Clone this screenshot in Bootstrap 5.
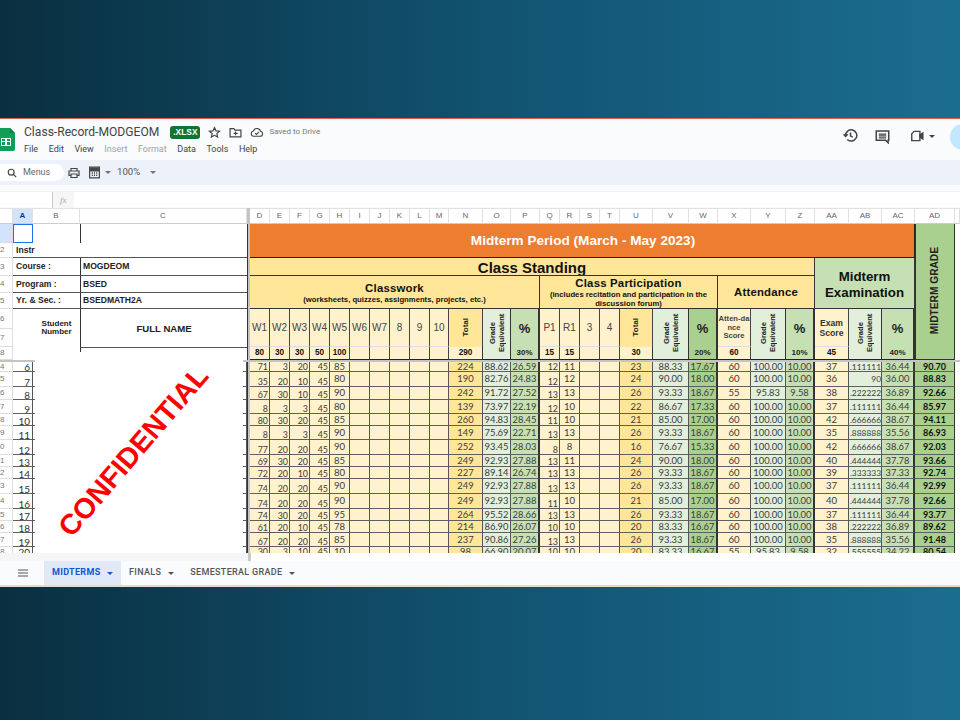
<!DOCTYPE html>
<html lang="en"><head><meta charset="utf-8"><title>Class-Record-MODGEOM</title>
<link rel="stylesheet" href="https://cdn.jsdelivr.net/npm/bootstrap@5.3.0/dist/css/bootstrap.min.css">
<style>
html,body{margin:0;height:720px;overflow:hidden}
body{background:linear-gradient(90deg,#0a2f40 0%,#115270 50%,#1b6d90 100%);font-family:"Roboto","Liberation Sans",sans-serif;color:#444}
.slide{padding-top:118px;height:720px}
.appwin{height:469px;background:#f9fbfd;border-top:1px solid #d9604c;border-bottom:2px solid #e8dcc0;overflow:hidden}
.titlebar{height:41px;position:relative}
.docname{font-size:12.1px;color:#444;line-height:14px}
.xlsx{background:#137333;color:#fff;font:700 8.4px "Liberation Sans",sans-serif;border-radius:3px;padding:2px 3px;line-height:9px;margin-left:11px}
.saved{font-size:8px;color:#777;margin-left:5px}
.mini{margin-left:8px}
.menus{font-size:9px;gap:10.5px;color:#444;line-height:12px}
.menus .off{color:#a0a4a8}
.titlecol{padding-left:24px;padding-top:6px}
.rightico{position:absolute;right:0;top:0;height:41px;width:120px}
.avatar{width:26px;height:26px;border-radius:50%;background:#c2e7ff;position:absolute;left:110px;top:5px}
.tools{height:25px;background:#edf2fa;gap:0}
.searchpill{width:64px;height:17px;background:#fff;border-radius:0 9px 9px 0;font-size:9px;color:#666;padding-left:7px;gap:6px}
.zoomtxt{font-size:9.6px;color:#555;margin-left:6px}
.namebar{height:23px;padding-top:6px;background:#fafbfc}
.namebar .inner{height:16px;background:#fff;border-top:1px solid #f2f2f2}
.fxbox{width:22px;height:16px;margin-left:52px;background:#f6f6f6;border-left:1px solid #ccc;color:#aaa;font:italic 9px "Liberation Serif",serif;padding-left:7px;line-height:16px}
.gridwrap{height:345px;overflow:hidden;position:relative;background:#fff}
.sg{width:960px;table-layout:fixed;border-collapse:separate;border-spacing:0;font-family:"Liberation Sans",sans-serif;color:#222}
.sg td{padding:0;overflow:hidden;line-height:1;white-space:nowrap;text-align:center;vertical-align:middle}
.sg tr.hd td{height:16px;font-size:8px;color:#666;background:#fff;border-right:1px solid #e0e0e0;border-bottom:1px solid #ccc;border-top:1px solid #e2e2e2}
.sg tr.hd td.activecol{background:#d3e3fd;color:#0b3a80;font-weight:700}
.sg td.rn{background:#fff;color:#777;font-size:8px;text-align:left;padding-left:0;border-right:1px solid #ddd;border-bottom:1px solid #ddd}
.sg td.rnact{background:#d3e3fd}
.sg td.sep{background:#c4c4c4;border-left:1px solid #333}
.sg tr.hd td.sep{background:#c4c4c4;border:0}
.r19{height:19px}.r15{height:15px}.r17{height:17px}.r16{height:16px}.r20{height:20px}.r18{height:18px}.r13{height:13px}.r10{height:10px}.r14{height:14px}.r12{height:12px}
.sg td.lbl{font-weight:700;font-size:8.6px;text-align:left;padding-left:3px;border-bottom:1px solid #555}
.sg td.lb2{border-left:1px solid #333;padding-left:2px}
.sg td.instr{font-weight:700;font-size:8.6px;text-align:left;padding-left:3px;border-bottom:1px solid #555}
.sg td.vline{border-left:1px solid #333}
.cellsel{box-shadow:inset 0 0 0 1px #1a73e8}
.sg td.orange{background:#ed7d31;color:#fff;font-weight:700;font-size:13.6px;border-bottom:1px solid #222;border-right:1px solid #222;padding-left:2px}
.gold{background:#ffe699;color:#111;font-weight:700}
.sg td.gold{border-right:1px solid #333;border-bottom:1px solid #333}
.sg td.cstand{font-size:15px;line-height:15px;vertical-align:top;padding-top:2px}
.big{font-size:11.4px}
.sg td.big{padding-top:2px}
.big b{font-size:11.4px;display:block;letter-spacing:.2px;margin-bottom:1px}
.sub{font-size:7.7px;display:block;line-height:9px;white-space:normal}
.sg td.exam{background:#c6e0b4;font-weight:700;font-size:13.3px;line-height:16px;color:#111;border-right:1px solid #333;border-bottom:1px solid #333;padding-top:3px}
.finalg{background:#a9d08e;border-left:1px solid #333;border-right:1px solid #333;border-bottom:1px solid #333;color:#222;font-size:10.2px;font-weight:700}
.vert{writing-mode:vertical-rl;transform:rotate(180deg);display:inline-block;white-space:normal}
.wk{background:#fff2cc;font-size:10px;color:#444;border-right:1px solid #444;border-bottom:1px solid #ddd}
.tt{background:#ffe699;border-right:1px solid #444}
.tot{font-size:8.2px;font-weight:700;color:#111;background:#fff2cc;border-right:1px solid #444;border-bottom:1px solid #222}
.sg td.ge{background:#e2efda;font-size:7.6px;font-weight:700;line-height:9px;color:#222;border-right:1px solid #333;border-bottom:1px solid #222}
.ge .vert{height:46px;text-align:center}
.pc{background:#c6e0b4;font-size:13px;font-weight:700;color:#222;border-right:2px solid #333;vertical-align:middle}
.pc2{background:#c6e0b4;font-size:8px;font-weight:700;color:#222;border-right:2px solid #333;border-bottom:1px solid #222}
.pd{background:#a9d08e}
.sg td.ttl{font-size:8px;font-weight:700}
.sg td.att{font-size:7.6px;line-height:8.8px;white-space:normal;font-weight:700;background:#fff2cc;color:#444;border-right:1px solid #444;border-bottom:1px solid #ddd}
.sg td.examh{font-size:8.6px;font-weight:700;white-space:normal;line-height:10px;background:#fff2cc;color:#333;border-right:1px solid #444;border-bottom:1px solid #ddd}
.sg td.fname{font-size:9.6px}
.sg td.lname{font-size:8px;color:#333;font-weight:400;vertical-align:top;padding-top:3px;border-top:1px solid #555}
.hgap td{height:2px;font-size:0;background:#c4c4c4!important;border:0!important}
.sg tr.dat td{line-height:8px}
.dat td{background:#fff2cc;font-family:"Lato",sans-serif;font-size:8.9px;color:#3c3c3c;border-right:1px solid #555;border-bottom:1px solid #5f5f5f}
.dat td:nth-child(1){background:#fff;color:#777;font:8px "Liberation Sans",sans-serif;text-align:left;border-right:1px solid #ddd;border-bottom:1px solid #ddd}
.dat td:nth-child(2){background:#fff;color:#333;font-size:10px;text-align:right;padding-right:2px;vertical-align:bottom}
.dat td:nth-child(3),.dat td:nth-child(4){background:#fff}
.dat td:nth-child(5){background:#c4c4c4;border-left:1px solid #333;border-right:0;border-bottom:0}
.dat td:nth-child(6),.dat td:nth-child(7),.dat td:nth-child(8),.dat td:nth-child(9),.dat td:nth-child(19){text-align:right;vertical-align:bottom;padding-right:1px}
.dat td:nth-child(10),.dat td:nth-child(20){font-size:9.6px}
.dat td:nth-child(16),.dat td:nth-child(23){background:#ffe699;font-size:9.4px}
.dat td:nth-child(17),.dat td:nth-child(24),.dat td:nth-child(27),.dat td:nth-child(30){background:#e2efda;font-size:9.4px}
.dat td:nth-child(18),.dat td:nth-child(28),.dat td:nth-child(31){background:#c6e0b4;font-size:9.4px;border-right:2px solid #333}
.dat td:nth-child(25){background:#a9d08e;font-size:9.4px;border-right:2px solid #333}
.dat td:nth-child(26),.dat td:nth-child(29){font-size:9.6px}
.dat td:nth-child(30){text-align:right;font-size:8.4px}
.dat td:nth-child(32){background:#a9d08e;font:700 9px "Lato",sans-serif;color:#111;border-right:1px solid #333}
.dat td:nth-child(33){background:#fff;border:0}
.coverbox{position:absolute;left:35px;top:150px;width:208px;height:195px;background:#fff;z-index:3}
.coverbox2{position:absolute;left:80px;top:144px;width:166px;height:6px;background:#fff;z-index:3}
.stamp{font:700 28.6px "Liberation Sans",sans-serif;color:#f00;transform:translate(-6px,-4px) rotate(-49.5deg);white-space:nowrap}
.strip{height:8px;background:#fff}
.strip .leftp{width:248px;background:#f5f6f7}
.strip .barp{width:3px;background:#c9c9c9}
.sheets{height:24px}
.hamb{margin-left:18px;width:10px;margin-right:16px}
.tabi{height:24px;font-size:9px;letter-spacing:.33px;color:#555;font-weight:500;padding:0 8px;gap:7px}
.tabi.on{background:#e1e9f7;color:#0b57d0;font-weight:700;width:77px;gap:0;justify-content:space-between;padding-right:8px}
.caret{width:0;height:0;border-left:3px solid transparent;border-right:3px solid transparent;border-top:3px solid currentColor}
</style></head><body>
<div class="slide"><div class="appwin d-flex flex-column">
<div class="titlebar d-flex">
 <svg width="15" height="24" viewBox="0 0 15 24" class="position-absolute start-0" style="top:9px"><path d="M-4 0H10L15 5V21Q15 23 13 23H-4Z" fill="#0f9d58"/><path d="M10 0L15 5H10Z" fill="#0b7d46"/><rect x="1" y="10" width="10" height="8" fill="#fff"/><path d="M2 13h3v-2H2zM7 13h3v-2H7zM2 17h3v-3H2zM7 17h3v-3H7z" fill="#0f9d58"/></svg>
 <div class="titlecol">
  <div class="d-flex align-items-center"><span class="docname">Class-Record-MODGEOM</span><span class="xlsx">.XLSX</span>
   <svg class="mini" width="13" height="13" viewBox="0 0 24 24" fill="none" stroke="#444" stroke-width="2.2"><path d="M12 3l2.800 6 6.500.7-4.900 4.400 1.400 6.400L12 17.200l-5.800 3.300 1.400-6.400L2.700 9.700 9.200 9z"/></svg>
   <svg class="mini" width="13" height="13" viewBox="0 0 24 24" fill="none" stroke="#444" stroke-width="2.2"><path d="M2 5h7l2 2.500h11V20H2zM12 10v7M8.500 13.500H16"/></svg>
   <svg class="mini" width="14" height="13" viewBox="0 0 24 24" fill="none" stroke="#444" stroke-width="2"><path d="M6 19a5 5 0 0 1-.6-9.900A7 7 0 0 1 18.600 9.700 4.700 4.700 0 0 1 18 19zM8.500 13l2.500 2.500 4.500-4.500"/></svg>
   <span class="saved">Saved to Drive</span></div>
  <div class="menus d-flex mt-1"><span>File</span><span>Edit</span><span>View</span><span class="off">Insert</span><span class="off">Format</span><span>Data</span><span>Tools</span><span>Help</span></div>
 </div>
 <div class="rightico">
  <svg class="position-absolute" style="left:3px;top:9px" width="15" height="15" viewBox="0 0 24 24" fill="none" stroke="#444" stroke-width="2.4"><path d="M4 12a9 9 0 1 1 2.800 6.500M1 10l3.200 3.500L7.500 10M12 7v5.500l3.500 2"/></svg>
  <svg class="position-absolute" style="left:35px;top:10px" width="15" height="15" viewBox="0 0 24 24" fill="none" stroke="#444" stroke-width="2.400"><path d="M2 3h20v15h-1v4l-4-4H2z"/><path d="M6 8h12M6 11h12M6 14h12" stroke-width="2"/></svg>
  <svg class="position-absolute" style="left:69px;top:10px" width="16" height="14" viewBox="0 0 24 24" fill="none" stroke="#444" stroke-width="2.400"><path d="M7 4h10v16H3V8z"/><path d="M17 10l5-3v10l-5-3z" fill="#444"/></svg>
  <span class="caret position-absolute" style="left:89px;top:16px"></span>
  <span class="avatar"></span>
 </div>
</div>
<div class="tools d-flex align-items-center">
 <div class="searchpill d-flex align-items-center"><svg width="10" height="10" viewBox="0 0 24 24" fill="none" stroke="#444" stroke-width="2.800"><circle cx="10" cy="10" r="7"/><path d="M15 15l7 7"/></svg><span>Menus</span></div>
 <svg class="ms-1" width="12" height="12" viewBox="0 0 24 24" fill="none" stroke="#444" stroke-width="2.400"><path d="M6 8V3h12v5M6 17H2V8h20v9h-4M6 14h12v7H6z"/></svg>
 <svg class="ms-2" width="13" height="13" viewBox="0 0 24 24" fill="none" stroke="#444" stroke-width="2.200"><path d="M3 2h18v20H3zM3 9h18"/><path d="M7 13h2M11 13h2M15 13h2M7 17h2M11 17h2M15 17h2" stroke-width="2.600"/><rect x="5" y="4" width="14" height="4" fill="#444"/></svg>
 <span class="caret ms-1 text-secondary"></span>
 <span class="zoomtxt">100%</span>
 <span class="caret text-secondary" style="margin-left:10px"></span>
</div>
<div class="namebar"><div class="inner d-flex"><div class="fxbox">fx</div></div></div>
<div class="gridwrap">
<table class="sg">
<colgroup><col width="13"><col width="20"><col width="47"><col width="167"><col width="3"><col width="20"><col width="20"><col width="20"><col width="20"><col width="20"><col width="20"><col width="20"><col width="20"><col width="20"><col width="19"><col width="34"><col width="28"><col width="29"><col width="20"><col width="20"><col width="20"><col width="20"><col width="33"><col width="36"><col width="29"><col width="33"><col width="35"><col width="29"><col width="34"><col width="33"><col width="33"><col width="40"><col width="5"></colgroup>
<tbody>
<tr class="hd"><td></td><td class="activecol">A</td><td>B</td><td>C</td><td class="sep"></td><td>D</td><td>E</td><td>F</td><td>G</td><td>H</td><td>I</td><td>J</td><td>K</td><td>L</td><td>M</td><td>N</td><td>O</td><td>P</td><td>Q</td><td>R</td><td>S</td><td>T</td><td>U</td><td>V</td><td>W</td><td>X</td><td>Y</td><td>Z</td><td>AA</td><td>AB</td><td>AC</td><td>AD</td><td></td></tr>
<tr class="r19"><td class="rn rnact"></td><td class="cellsel"></td><td></td><td class="vline"></td><td class="sep" rowspan="8"></td><td class="orange" colspan="26" rowspan="2">Midterm Period (March - May 2023)</td><td class="finalg" rowspan="8"><span class="vert">MIDTERM GRADE</span></td><td rowspan="8"></td></tr>
<tr class="r15"><td class="rn">2</td><td class="instr" colspan="2">Instr</td><td class="lbl"></td></tr>
<tr class="r17"><td class="rn">3</td><td class="lbl" colspan="2">Course :</td><td class="lbl lb2">MOGDEOM</td><td class="gold cstand" colspan="23">Class Standing</td><td class="exam" colspan="3" rowspan="3">Midterm<br>Examination</td></tr>
<tr class="r16"><td class="rn">4</td><td class="lbl" colspan="2">Program :</td><td class="lbl lb2">BSED</td><td class="gold big" colspan="13" rowspan="2"><b>Classwork</b><span class="sub">(worksheets, quizzes, assignments, projects, etc.)</span></td><td class="gold big" colspan="7" rowspan="2"><b>Class Participation</b><span class="sub">(includes recitation and participation in the discussion forum)</span></td><td class="gold big" colspan="3" rowspan="2"><b>Attendance</b></td></tr>
<tr class="r16"><td class="rn">5</td><td class="lbl" colspan="2">Yr. &amp; Sec. :</td><td class="lbl lb2">BSEDMATH2A</td></tr>
<tr class="r20"><td class="rn">6</td><td rowspan="3"></td><td class="ttl" rowspan="2">Student<br>Number</td><td class="vline ttl fname" rowspan="2">FULL NAME</td><td class="wk" rowspan="2">W1</td><td class="wk" rowspan="2">W2</td><td class="wk" rowspan="2">W3</td><td class="wk" rowspan="2">W4</td><td class="wk" rowspan="2">W5</td><td class="wk" rowspan="2">W6</td><td class="wk" rowspan="2">W7</td><td class="wk" rowspan="2">8</td><td class="wk" rowspan="2">9</td><td class="wk" rowspan="2">10</td><td class="tt ttl" rowspan="2"><span class="vert">Total</span></td><td class="ge" rowspan="3"><span class="vert">Grade Equivalent</span></td><td class="pc" rowspan="2">%</td><td class="wk" rowspan="2">P1</td><td class="wk" rowspan="2">R1</td><td class="wk" rowspan="2">3</td><td class="wk" rowspan="2">4</td><td class="tt ttl" rowspan="2"><span class="vert">Total</span></td><td class="ge" rowspan="3"><span class="vert">Grade Equivalent</span></td><td class="pc pd" rowspan="2">%</td><td class="att" rowspan="2">Atten-da nce Score</td><td class="ge" rowspan="3"><span class="vert">Grade Equivalent</span></td><td class="pc" rowspan="2">%</td><td class="examh" rowspan="2">Exam<br>Score</td><td class="ge" rowspan="3"><span class="vert">Grade Equivalent</span></td><td class="pc" rowspan="2">%</td></tr>
<tr class="r18"><td class="rn">7</td></tr>
<tr class="r13"><td class="rn">8</td><td></td><td class="vline lname">Last Name / First Name / MI</td><td class="tot">80</td><td class="tot">30</td><td class="tot">30</td><td class="tot">50</td><td class="tot">100</td><td class="tot"></td><td class="tot"></td><td class="tot"></td><td class="tot"></td><td class="tot"></td><td class="tot gold">290</td><td class="pc2">30%</td><td class="tot">15</td><td class="tot">15</td><td class="tot"></td><td class="tot"></td><td class="tot gold">30</td><td class="pc2 pd">20%</td><td class="tot">60</td><td class="pc2">10%</td><td class="tot">45</td><td class="pc2">40%</td></tr>
<tr class="hgap"><td colspan="33"></td></tr>
<tr class="dat r10"><td>4</td><td>6</td><td></td><td></td><td></td><td>71</td><td>3</td><td>20</td><td>45</td><td>85</td><td></td><td></td><td></td><td></td><td></td><td>224</td><td>88.62</td><td>26.59</td><td>12</td><td>11</td><td></td><td></td><td>23</td><td>88.33</td><td>17.67</td><td>60</td><td>100.00</td><td>10.00</td><td>37</td><td>.111111</td><td>36.44</td><td>90.70</td><td></td></tr>
<tr class="dat r15"><td>5</td><td>7</td><td></td><td></td><td></td><td>35</td><td>20</td><td>10</td><td>45</td><td>80</td><td></td><td></td><td></td><td></td><td></td><td>190</td><td>82.76</td><td>24.83</td><td>12</td><td>12</td><td></td><td></td><td>24</td><td>90.00</td><td>18.00</td><td>60</td><td>100.00</td><td>10.00</td><td>36</td><td>90</td><td>36.00</td><td>88.83</td><td></td></tr>
<tr class="dat r13"><td>6</td><td>8</td><td></td><td></td><td></td><td>67</td><td>30</td><td>10</td><td>45</td><td>90</td><td></td><td></td><td></td><td></td><td></td><td>242</td><td>91.72</td><td>27.52</td><td>13</td><td>13</td><td></td><td></td><td>26</td><td>93.33</td><td>18.67</td><td>55</td><td>95.83</td><td>9.58</td><td>38</td><td>.222222</td><td>36.89</td><td>92.66</td><td></td></tr>
<tr class="dat r14"><td>7</td><td>9</td><td></td><td></td><td></td><td>8</td><td>3</td><td>3</td><td>45</td><td>80</td><td></td><td></td><td></td><td></td><td></td><td>139</td><td>73.97</td><td>22.19</td><td>12</td><td>10</td><td></td><td></td><td>22</td><td>86.67</td><td>17.33</td><td>60</td><td>100.00</td><td>10.00</td><td>37</td><td>.111111</td><td>36.44</td><td>85.97</td><td></td></tr>
<tr class="dat r12"><td>8</td><td>10</td><td></td><td></td><td></td><td>80</td><td>30</td><td>20</td><td>45</td><td>85</td><td></td><td></td><td></td><td></td><td></td><td>260</td><td>94.83</td><td>28.45</td><td>11</td><td>10</td><td></td><td></td><td>21</td><td>85.00</td><td>17.00</td><td>60</td><td>100.00</td><td>10.00</td><td>42</td><td>.666666</td><td>38.67</td><td>94.11</td><td></td></tr>
<tr class="dat r14"><td>9</td><td>11</td><td></td><td></td><td></td><td>8</td><td>3</td><td>3</td><td>45</td><td>90</td><td></td><td></td><td></td><td></td><td></td><td>149</td><td>75.69</td><td>22.71</td><td>13</td><td>13</td><td></td><td></td><td>26</td><td>93.33</td><td>18.67</td><td>60</td><td>100.00</td><td>10.00</td><td>35</td><td>.888888</td><td>35.56</td><td>86.93</td><td></td></tr>
<tr class="dat r15"><td>0</td><td>12</td><td></td><td></td><td></td><td>77</td><td>20</td><td>20</td><td>45</td><td>90</td><td></td><td></td><td></td><td></td><td></td><td>252</td><td>93.45</td><td>28.03</td><td>8</td><td>8</td><td></td><td></td><td>16</td><td>76.67</td><td>15.33</td><td>60</td><td>100.00</td><td>10.00</td><td>42</td><td>.666666</td><td>38.67</td><td>92.03</td><td></td></tr>
<tr class="dat r12"><td>1</td><td>13</td><td></td><td></td><td></td><td>69</td><td>30</td><td>20</td><td>45</td><td>85</td><td></td><td></td><td></td><td></td><td></td><td>249</td><td>92.93</td><td>27.88</td><td>13</td><td>11</td><td></td><td></td><td>24</td><td>90.00</td><td>18.00</td><td>60</td><td>100.00</td><td>10.00</td><td>40</td><td>.444444</td><td>37.78</td><td>93.66</td><td></td></tr>
<tr class="dat r12"><td>2</td><td>14</td><td></td><td></td><td></td><td>72</td><td>20</td><td>10</td><td>45</td><td>80</td><td></td><td></td><td></td><td></td><td></td><td>227</td><td>89.14</td><td>26.74</td><td>13</td><td>13</td><td></td><td></td><td>26</td><td>93.33</td><td>18.67</td><td>60</td><td>100.00</td><td>10.00</td><td>39</td><td>.333333</td><td>37.33</td><td>92.74</td><td></td></tr>
<tr class="dat r15"><td>3</td><td>15</td><td></td><td></td><td></td><td>74</td><td>20</td><td>20</td><td>45</td><td>90</td><td></td><td></td><td></td><td></td><td></td><td>249</td><td>92.93</td><td>27.88</td><td>13</td><td>13</td><td></td><td></td><td>26</td><td>93.33</td><td>18.67</td><td>60</td><td>100.00</td><td>10.00</td><td>37</td><td>.111111</td><td>36.44</td><td>92.99</td><td></td></tr>
<tr class="dat r15"><td>4</td><td>16</td><td></td><td></td><td></td><td>74</td><td>20</td><td>20</td><td>45</td><td>90</td><td></td><td></td><td></td><td></td><td></td><td>249</td><td>92.93</td><td>27.88</td><td>11</td><td>10</td><td></td><td></td><td>21</td><td>85.00</td><td>17.00</td><td>60</td><td>100.00</td><td>10.00</td><td>40</td><td>.444444</td><td>37.78</td><td>92.66</td><td></td></tr>
<tr class="dat r12"><td>5</td><td>17</td><td></td><td></td><td></td><td>74</td><td>30</td><td>20</td><td>45</td><td>95</td><td></td><td></td><td></td><td></td><td></td><td>264</td><td>95.52</td><td>28.66</td><td>13</td><td>13</td><td></td><td></td><td>26</td><td>93.33</td><td>18.67</td><td>60</td><td>100.00</td><td>10.00</td><td>37</td><td>.111111</td><td>36.44</td><td>93.77</td><td></td></tr>
<tr class="dat r12"><td>6</td><td>18</td><td></td><td></td><td></td><td>61</td><td>20</td><td>10</td><td>45</td><td>78</td><td></td><td></td><td></td><td></td><td></td><td>214</td><td>86.90</td><td>26.07</td><td>10</td><td>10</td><td></td><td></td><td>20</td><td>83.33</td><td>16.67</td><td>60</td><td>100.00</td><td>10.00</td><td>38</td><td>.222222</td><td>36.89</td><td>89.62</td><td></td></tr>
<tr class="dat r14"><td>7</td><td>19</td><td></td><td></td><td></td><td>67</td><td>20</td><td>20</td><td>45</td><td>85</td><td></td><td></td><td></td><td></td><td></td><td>237</td><td>90.86</td><td>27.26</td><td>13</td><td>13</td><td></td><td></td><td>26</td><td>93.33</td><td>18.67</td><td>60</td><td>100.00</td><td>10.00</td><td>35</td><td>.888888</td><td>35.56</td><td>91.48</td><td></td></tr>
<tr class="dat r10"><td>8</td><td>20</td><td></td><td></td><td></td><td>30</td><td>3</td><td>10</td><td>45</td><td>10</td><td></td><td></td><td></td><td></td><td></td><td>98</td><td>66.90</td><td>20.07</td><td>10</td><td>10</td><td></td><td></td><td>20</td><td>83.33</td><td>16.67</td><td>55</td><td>95.83</td><td>9.58</td><td>32</td><td>.555555</td><td>34.22</td><td>80.54</td><td></td></tr>
</tbody></table>
<div class="coverbox2"></div>
<div class="coverbox d-flex align-items-center justify-content-center"><span class="stamp">CONFIDENTIAL</span></div>
</div>
<div class="strip d-flex"><div class="leftp"></div><div class="barp"></div></div>
<div class="sheets d-flex align-items-center">
 <svg class="hamb" width="10" height="8" viewBox="0 0 10 8"><path d="M0 1h10M0 4h10M0 7h10" stroke="#555" stroke-width="1"/></svg>
 <div class="tabi on d-flex align-items-center"><span>MIDTERMS</span><span class="caret"></span></div>
 <div class="tabi d-flex align-items-center"><span>FINALS</span><span class="caret"></span></div>
 <div class="tabi d-flex align-items-center"><span>SEMESTERAL GRADE</span><span class="caret"></span></div>
</div>
</div></div>
</body></html>
